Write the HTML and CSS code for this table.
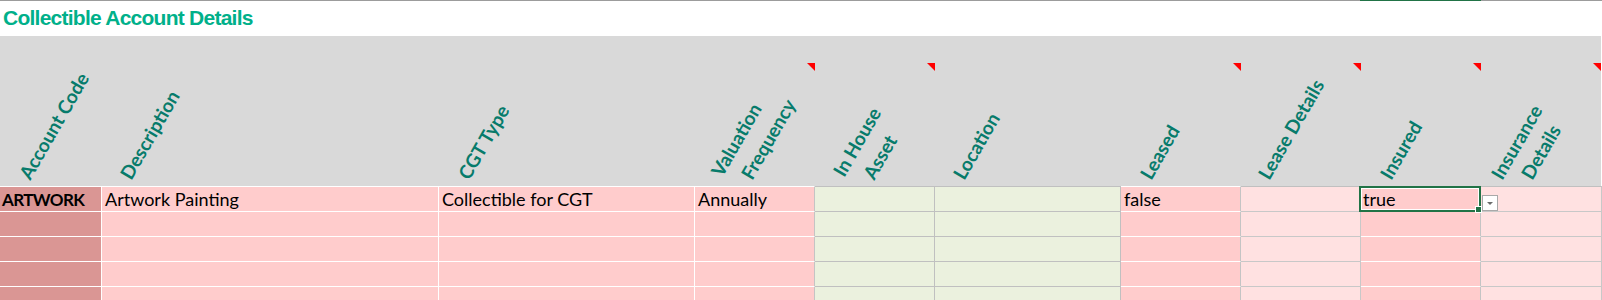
FILE: index.html
```html
<!DOCTYPE html>
<html>
<head>
<meta charset="utf-8">
<link rel="stylesheet" href="styles.css">
</head>
<body>
<div class="sheet">
  <div class="topline"><div class="tl-gray tl-left"></div><div class="tl-sel"></div><div class="tl-gray tl-right"></div></div>
  <div class="title">Collectible Account Details</div>

  <div class="grid head">
    <div class="h pl23"><span class="lbl">Account Code</span></div>
    <div class="h pl22"><span class="lbl">Description</span></div>
    <div class="h pl23"><span class="lbl">CGT Type</span></div>
    <div class="h pl20 note"><span class="lbl up">Valuation</span><span class="lbl">Frequency</span><i class="tri"></i></div>
    <div class="h pl22 note"><span class="lbl up">In House</span><span class="lbl">Asset</span><i class="tri"></i></div>
    <div class="h pl22"><span class="lbl">Location</span></div>
    <div class="h pl23 note"><span class="lbl">Leased</span><i class="tri"></i></div>
    <div class="h pl21 note"><span class="lbl">Lease Details</span><i class="tri"></i></div>
    <div class="h pl23 note"><span class="lbl">Insured</span><i class="tri"></i></div>
    <div class="h pl14 note last"><span class="lbl">Insurance</span><span class="lbl">Details</span><i class="tri"></i></div>
  </div>

  <div class="rows">
    <div class="grid row">
      <div class="c ca"><b>ARTWORK</b></div>
      <div class="c cp">Artwork Painting</div>
      <div class="c cp">Collectible for CGT</div>
      <div class="c cp gr">Annually</div>
      <div class="c cg"></div>
      <div class="c cg"></div>
      <div class="c cp gr">false</div>
      <div class="c cl"></div>
      <div class="c cp gr sel">true<span class="selbox"><span class="handle"></span></span><span class="dd"><span class="ddarrow"></span></span></div>
      <div class="c cl"></div>
    </div>
    <div class="grid row">
      <div class="c ca"></div><div class="c cp"></div><div class="c cp"></div><div class="c cp gr"></div><div class="c cg"></div><div class="c cg"></div><div class="c cp gr"></div><div class="c cl"></div><div class="c cp gr"></div><div class="c cl"></div>
    </div>
    <div class="grid row">
      <div class="c ca"></div><div class="c cp"></div><div class="c cp"></div><div class="c cp gr"></div><div class="c cg"></div><div class="c cg"></div><div class="c cp gr"></div><div class="c cl"></div><div class="c cp gr"></div><div class="c cl"></div>
    </div>
    <div class="grid row">
      <div class="c ca"></div><div class="c cp"></div><div class="c cp"></div><div class="c cp gr"></div><div class="c cg"></div><div class="c cg"></div><div class="c cp gr"></div><div class="c cl"></div><div class="c cp gr"></div><div class="c cl"></div>
    </div>
    <div class="grid row">
      <div class="c ca"></div><div class="c cp"></div><div class="c cp"></div><div class="c cp gr"></div><div class="c cg"></div><div class="c cg"></div><div class="c cp gr"></div><div class="c cl"></div><div class="c cp gr"></div><div class="c cl"></div>
    </div>
  </div>
</div>
</body>
</html>
```

FILE: styles.css
```css
html, body {
  margin: 0;
  padding: 0;
  background: #ffffff;
}
.sheet {
  width: 1602px;
  height: 300px;
  overflow: hidden;
  font-family: Lato, "Liberation Sans", sans-serif;
}
.topline {
  display: flex;
  height: 1px;
}
.tl-gray { background: #9c9c9c; }
.tl-left { width: 1360px; }
.tl-sel { width: 121px; background: #217346; }
.tl-right { flex: 1; }

.title {
  height: 35px;
  box-sizing: border-box;
  padding: 4px 0 0 3px;
  font-family: "Liberation Sans", Arial, sans-serif;
  font-weight: bold;
  font-size: 21px;
  letter-spacing: -0.75px;
  line-height: 26px;
  color: #00b08a;
}

.grid {
  display: grid;
  grid-template-columns: 102px 337px 256px 120px 120px 186px 120px 120px 120px 121px;
}

.head {
  height: 150px;
  background: #d9d9d9;
}
.h {
  position: relative;
  display: flex;
  align-items: flex-end;
  gap: 30px;
  box-sizing: border-box;
  padding-bottom: 4px;
}
.h.last { border-right: 1px solid #ffffff; }
.pl14 { padding-left: 23px; }
.pl20 { padding-left: 29px; }
.pl21 { padding-left: 30px; }
.pl22 { padding-left: 31px; }
.pl23 { padding-left: 32px; }

.lbl {
  display: block;
  width: 0;
  white-space: nowrap;
  font-weight: bold;
  font-size: 19px;
  line-height: 19px;
  color: #077b6b;
  transform: rotate(-60deg);
  transform-origin: 0 100%;
}
.lbl.up { margin-bottom: 3px; }

.tri {
  position: absolute;
  top: 27px;
  right: 0;
  width: 8px;
  height: 8px;
  background: #ff0000;
  clip-path: polygon(0 0, 100% 0, 100% 100%);
}

.row .c {
  position: relative;
  box-sizing: border-box;
  height: 25px;
  padding-left: 3px;
  font-size: 18px;
  line-height: 24px;
  color: #000000;
  white-space: nowrap;
  border-right: 1px solid #ffffff;
  border-bottom: 1px solid #ffffff;
}
.rows .row:first-child .c {
  height: 26px;
  border-top: 1px solid #ffffff;
}
.c b {
  font-weight: 700;
  font-size: 17px;
  letter-spacing: -0.6px;
}
.ca { background: #da9694; padding-left: 2px !important; }
.cp { background: #ffcccc; }
.gr { border-right-color: #c4c4c4 !important; }
.cg {
  background: #ebf1de;
  border-right-color: #c0c0c0 !important;
  border-bottom-color: #c0c0c0 !important;
}
.rows .row:first-child .cg,
.rows .row:first-child .cl { border-top-color: #c0c0c0 !important; }
.cl {
  background: #ffe1e1;
  border-right-color: #c8c8c8 !important;
  border-bottom-color: #c8c8c8 !important;
}
.sel {
  padding-left: 2px !important;
  z-index: 2;
}
.selbox {
  position: absolute;
  left: -2px;
  top: -1px;
  right: -1px;
  bottom: -1px;
  border: 2px solid #217346;
  box-shadow: inset 0 0 0 1px #ffffff;
}
.handle {
  position: absolute;
  right: -3px;
  bottom: -3px;
  width: 5px;
  height: 5px;
  background: #217346;
  border: 1px solid #ffffff;
}
.dd {
  position: absolute;
  left: 121px;
  top: 8px;
  width: 16px;
  height: 16px;
  box-sizing: border-box;
  background: #ffffff;
  border: 1px solid #a9a9a9;
  display: flex;
  align-items: center;
  justify-content: center;
}
.ddarrow {
  width: 0;
  height: 0;
  border-left: 3px solid transparent;
  border-right: 3px solid transparent;
  border-top: 3px solid #6b6b6b;
}
```
